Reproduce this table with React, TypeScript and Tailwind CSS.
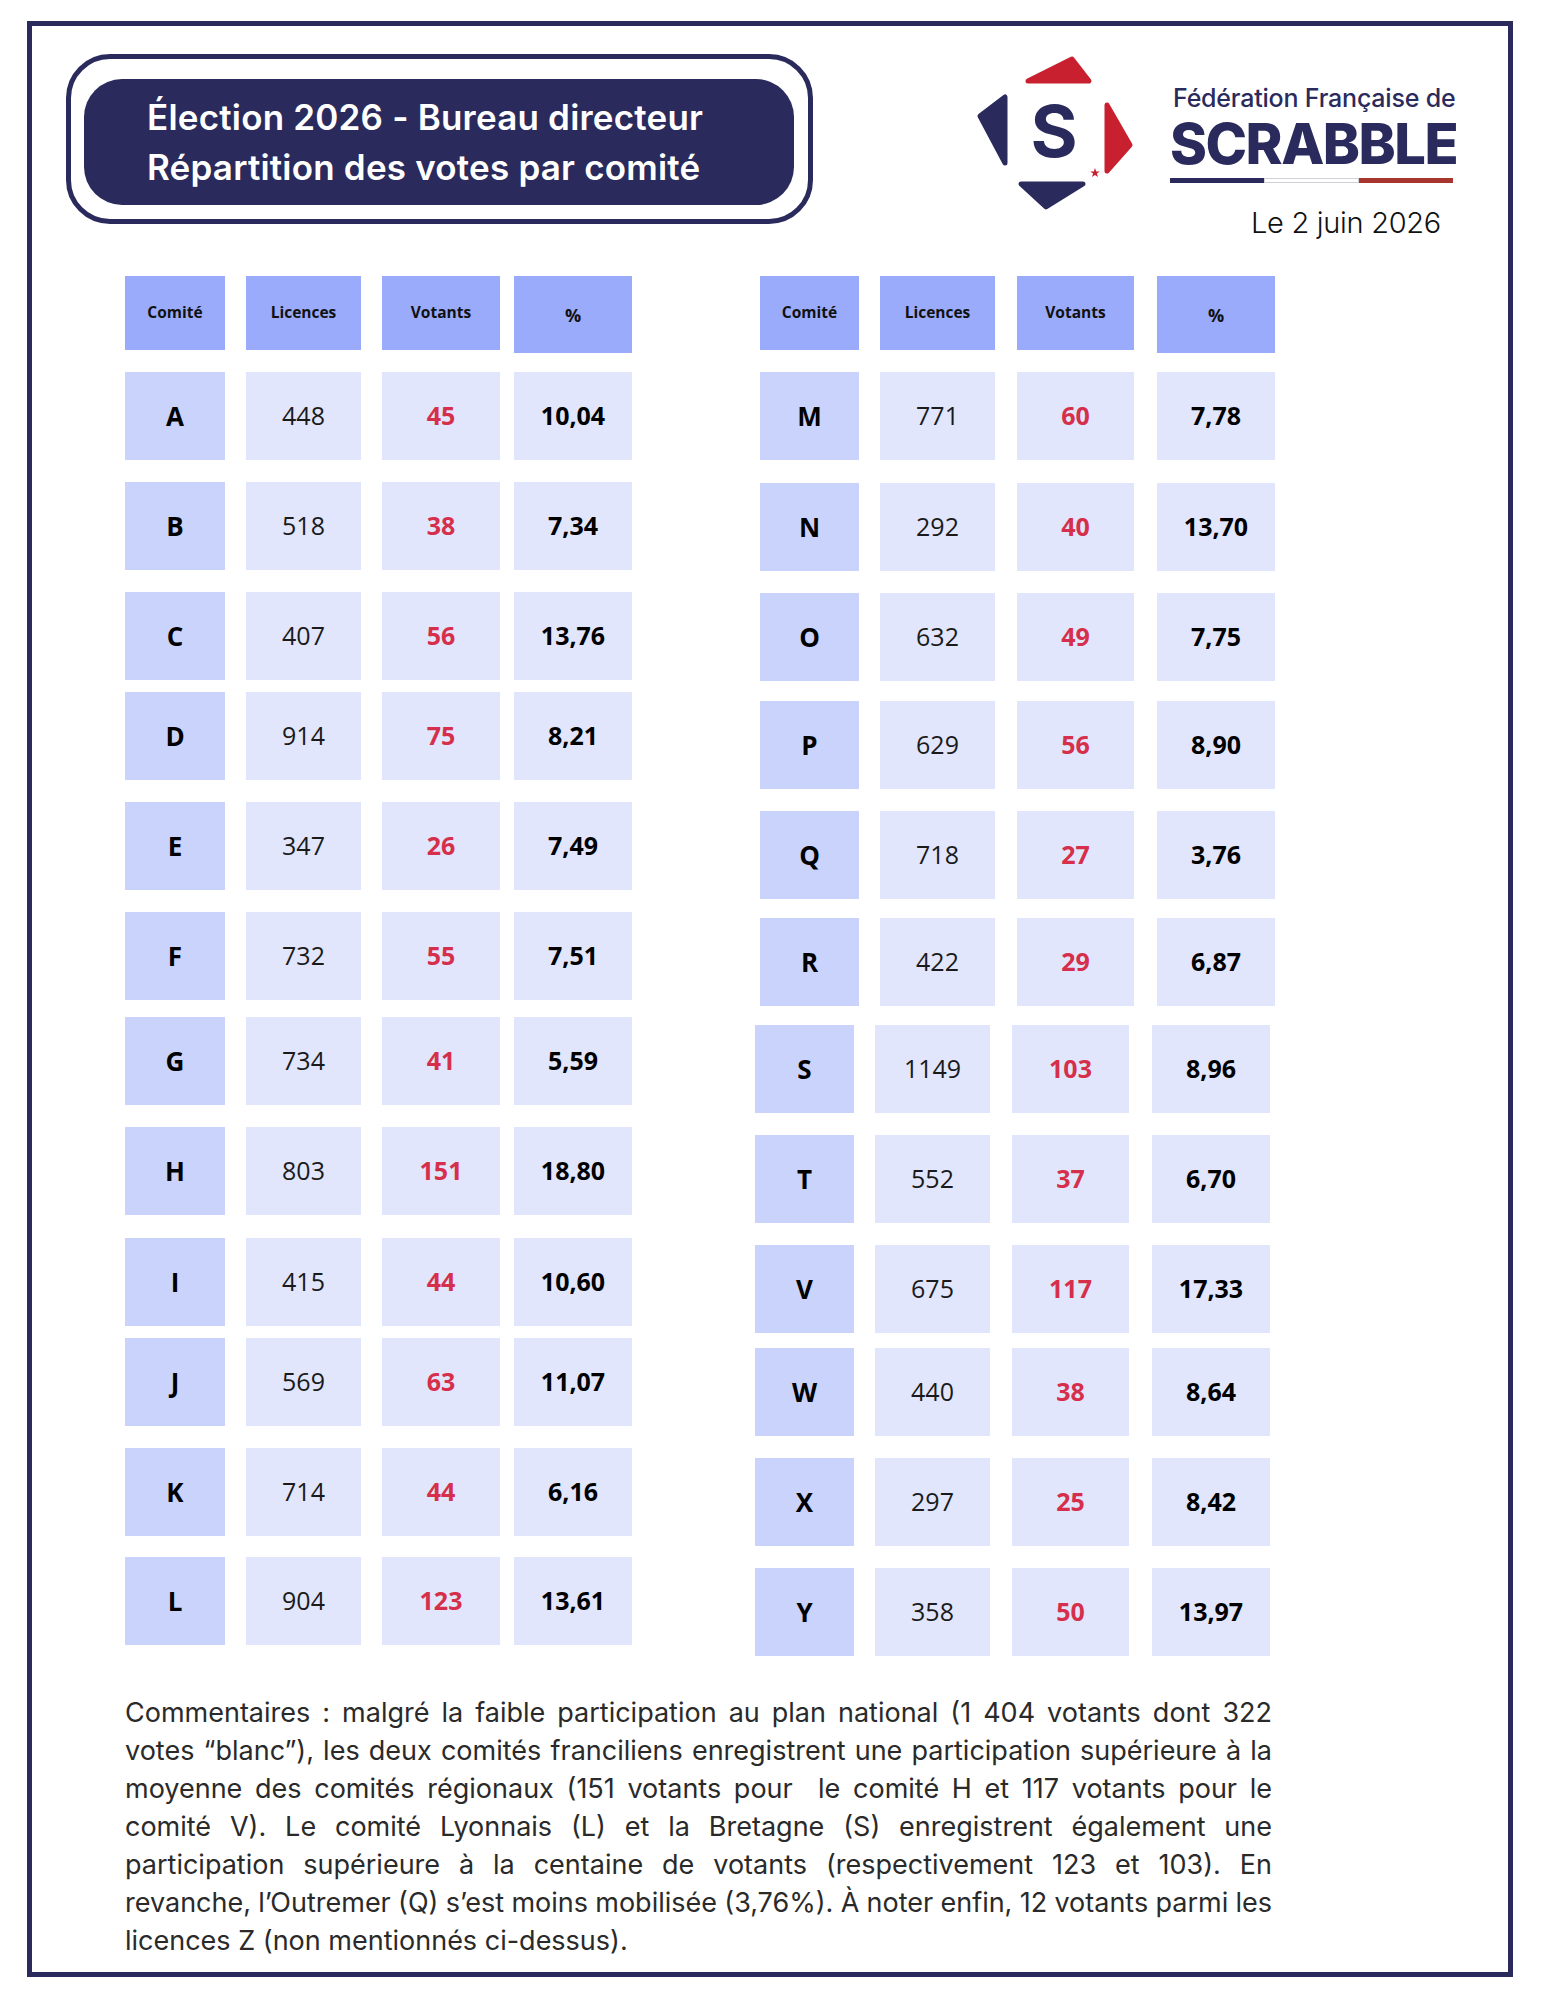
import React from "react";

type Row = { c: string; l: string; v: string; p: string; mt: string; shift?: boolean };

const leftRows: Row[] = [
  { c: "A", l: "448", v: "45", p: "10,04", mt: "mt-[22px]" },
  { c: "B", l: "518", v: "38", p: "7,34", mt: "mt-[22px]" },
  { c: "C", l: "407", v: "56", p: "13,76", mt: "mt-[22px]" },
  { c: "D", l: "914", v: "75", p: "8,21", mt: "mt-[12px]" },
  { c: "E", l: "347", v: "26", p: "7,49", mt: "mt-[22px]" },
  { c: "F", l: "732", v: "55", p: "7,51", mt: "mt-[22px]" },
  { c: "G", l: "734", v: "41", p: "5,59", mt: "mt-[17px]" },
  { c: "H", l: "803", v: "151", p: "18,80", mt: "mt-[22px]" },
  { c: "I", l: "415", v: "44", p: "10,60", mt: "mt-[23px]" },
  { c: "J", l: "569", v: "63", p: "11,07", mt: "mt-[12px]" },
  { c: "K", l: "714", v: "44", p: "6,16", mt: "mt-[22px]" },
  { c: "L", l: "904", v: "123", p: "13,61", mt: "mt-[21px]" },
];

const rightRows: Row[] = [
  { c: "M", l: "771", v: "60", p: "7,78", mt: "mt-[22px]" },
  { c: "N", l: "292", v: "40", p: "13,70", mt: "mt-[23px]" },
  { c: "O", l: "632", v: "49", p: "7,75", mt: "mt-[22px]" },
  { c: "P", l: "629", v: "56", p: "8,90", mt: "mt-[20px]" },
  { c: "Q", l: "718", v: "27", p: "3,76", mt: "mt-[22px]" },
  { c: "R", l: "422", v: "29", p: "6,87", mt: "mt-[19px]" },
  { c: "S", l: "1149", v: "103", p: "8,96", mt: "mt-[19px]", shift: true },
  { c: "T", l: "552", v: "37", p: "6,70", mt: "mt-[22px]", shift: true },
  { c: "V", l: "675", v: "117", p: "17,33", mt: "mt-[22px]", shift: true },
  { c: "W", l: "440", v: "38", p: "8,64", mt: "mt-[15px]", shift: true },
  { c: "X", l: "297", v: "25", p: "8,42", mt: "mt-[22px]", shift: true },
  { c: "Y", l: "358", v: "50", p: "13,97", mt: "mt-[22px]", shift: true },
];

function Table({ rows, cols }: { rows: Row[]; cols: string[] }) {
  return (
    <div className="flex flex-col font-['Open_Sans',sans-serif]">
      <div className="flex items-start h-[74px]">
        {["Comité", "Licences", "Votants", "%"].map((h, i) => (
          <div
            key={h}
            className={`${cols[i]} ${i === 3 ? "h-[77px] text-[18px] pt-[1px]" : "h-[74px] text-[15.5px]"} shrink-0 bg-[#99abfa] flex items-center justify-center font-bold text-[#111]`}
          >
            {h}
          </div>
        ))}
      </div>
      {rows.map((r) => (
        <div key={r.c} className={`flex ${r.mt} ${r.shift ? "-ml-[5px]" : ""}`}>
          <div className={`${cols[0]} h-[88px] bg-[#c9d3fb] flex items-center justify-center font-bold text-[26px] text-black`}>
            {r.c}
          </div>
          <div className={`${cols[1]} h-[88px] bg-[#e1e6fc] flex items-center justify-center text-[25px] text-[#1a1a1a]`}>
            {r.l}
          </div>
          <div className={`${cols[2]} h-[88px] bg-[#e1e6fc] flex items-center justify-center font-bold text-[25px] text-[#d62f4b]`}>
            {r.v}
          </div>
          <div className={`${cols[3]} h-[88px] bg-[#e1e6fc] flex items-center justify-center font-bold text-[25px] text-black`}>
            {r.p}
          </div>
        </div>
      ))}
    </div>
  );
}

function Logo() {
  const navy = "#2a2b5c";
  const red = "#c8202f";
  return (
    <svg width="165" height="165" viewBox="0 0 165 165" className="shrink-0">
      <polygon points="56,31 100,9 117,31" fill={red} stroke={red} strokeWidth="5" strokeLinejoin="round" />
      <polygon points="33,47 33,113 8,66" fill={navy} stroke={navy} strokeWidth="5" strokeLinejoin="round" />
      <polygon points="135,55 135,121 158,95" fill={red} stroke={red} strokeWidth="5" strokeLinejoin="round" />
      <polygon points="49,134 111,134 74,157" fill={navy} stroke={navy} strokeWidth="5" strokeLinejoin="round" />
      <text
        x="82"
        y="107"
        textAnchor="middle"
        fontFamily="Inter, sans-serif"
        fontWeight="700"
        fontSize="72"
        fill={navy}
      >
        S
      </text>
      <polygon
        points="123,118 124.2,121.4 127.8,121.4 124.9,123.6 126,127 123,124.9 120,127 121.1,123.6 118.2,121.4 121.8,121.4"
        fill={red}
      />
    </svg>
  );
}

const lines = [
  "Commentaires : malgré la faible participation au plan national (1 404 votants dont 322",
  "votes “blanc”), les deux comités franciliens enregistrent une participation supérieure à la",
  "moyenne des comités régionaux (151 votants pour  le comité H et 117 votants pour le",
  "comité V). Le comité Lyonnais (L) et la Bretagne (S) enregistrent également une",
  "participation supérieure à la centaine de votants (respectivement 123 et 103). En",
  "revanche, l’Outremer (Q) s’est moins mobilisée (3,76%). À noter enfin, 12 votants parmi les",
];

export default function App() {
  const leftCols = ["w-[100px]", "ml-[21px] w-[115px]", "ml-[21px] w-[118px]", "ml-[14px] w-[118px]"];
  const rightCols = ["w-[99px]", "ml-[21px] w-[115px]", "ml-[22px] w-[117px]", "ml-[23px] w-[118px]"];
  return (
    <div className="w-[1545px] h-[1999px] bg-white overflow-hidden">
      <div className="ml-[27px] mt-[21px] w-[1486px] h-[1956px] border-[5px] border-[#2a2b5c] flex flex-col">
        {/* header */}
        <div className="flex items-start h-[250px] shrink-0">
          <div className="ml-[34px] mt-[28px] w-[747px] h-[170px] border-[5px] border-[#2a2b5c] rounded-[44px] shrink-0">
            <div className="ml-[13px] mt-[20px] w-[710px] h-[126px] bg-[#2a2b5c] rounded-[38px] pl-[63px] pt-[13px] font-['Inter',sans-serif] font-semibold text-white text-[35px] leading-[50px] tracking-[0.2px]">
              <div>Élection 2026 - Bureau directeur</div>
              <div>Répartition des votes par comité</div>
            </div>
          </div>
          <div className="ml-[159px] mt-[24px]">
            <Logo />
          </div>
          <div className="ml-[33px] mt-[58px] flex flex-col font-['Inter',sans-serif] text-[#2a2b5c]">
            <div className="text-[25px] leading-[28px] font-medium pl-[3px] tracking-[-0.2px]">Fédération Française de</div>
            <div className="mt-[3px] text-[56px] leading-[58px] font-extrabold tracking-[-1.5px]">SCRABBLE</div>
            <div className="mt-[5px] flex h-[5px] w-[283px]">
              <div className="flex-1 bg-[#2a2b5c]" />
              <div className="flex-1 bg-white border border-[#cfcfd6]" />
              <div className="flex-1 bg-[#a8362f]" />
            </div>
            <div className="mt-[22px] pl-[81px] text-[29px] leading-[36px] font-light text-[#111] tracking-[-0.3px]">
              Le 2 juin 2026
            </div>
          </div>
        </div>
        {/* tables */}
        <div className="flex items-start ml-[93px]">
          <Table rows={leftRows} cols={leftCols} />
          <div className="ml-[128px]">
            <Table rows={rightRows} cols={rightCols} />
          </div>
        </div>
        {/* comment */}
        <div className="ml-[93px] mt-[38px] w-[1147px] font-['Inter',sans-serif] text-[27px] leading-[38px] text-[#2a2a2a] [word-spacing:-3px]">
          {lines.map((l, i) => (
            <div key={i} className="whitespace-pre text-justify [text-align-last:justify]">
              {l}
            </div>
          ))}
          <div className="[word-spacing:0px]">licences Z (non mentionnés ci-dessus).</div>
        </div>
      </div>
    </div>
  );
}
